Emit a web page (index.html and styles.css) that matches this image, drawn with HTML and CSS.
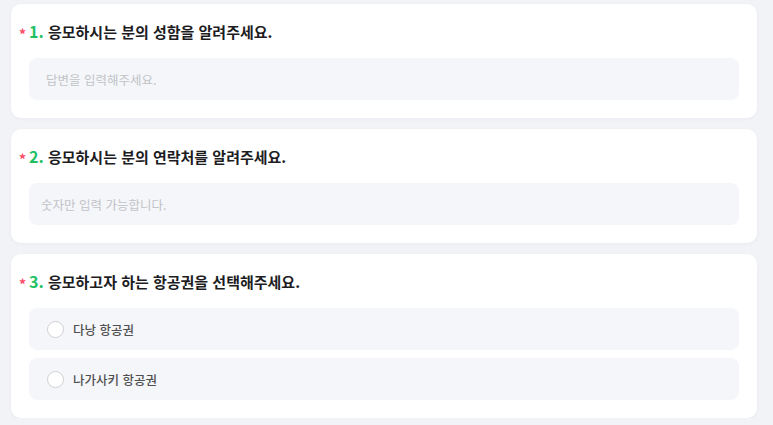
FILE: index.html
```html
<!DOCTYPE html>
<html lang="ko">
<head>
    <meta charset="UTF-8">
    <meta name="viewport" content="width=device-width, initial-scale=1.0">
    <title>항공권 응모</title>
    <link rel="stylesheet" href="styles.css">
</head>
<body>
    <div class="formWrap">
        <div class="qCard">
            <h3 class="qTitle"><span class="req">*</span><span class="num">1.</span> 응모하시는 분의 성함을 알려주세요.</h3>
            <input class="answer" type="text" placeholder="답변을 입력해주세요.">
        </div>

        <div class="qCard">
            <h3 class="qTitle"><span class="req">*</span><span class="num">2.</span> 응모하시는 분의 연락처를 알려주세요.</h3>
            <input class="answer answerTight" type="text" placeholder="숫자만 입력 가능합니다.">
        </div>

        <div class="qCard">
            <h3 class="qTitle"><span class="req">*</span><span class="num">3.</span> 응모하고자 하는 항공권을 선택해주세요.</h3>
            <label class="option">
                <input type="radio" name="ticket" value="danang">
                <span class="dot"></span>
                <span>다낭 항공권</span>
            </label>
            <label class="option">
                <input type="radio" name="ticket" value="nagasaki">
                <span class="dot"></span>
                <span>나가사키 항공권</span>
            </label>
        </div>
    </div>
</body>
</html>
```

FILE: styles.css
```css
html{
    height: 100%;
}
body{
    margin: 0;
    padding: 0;
    background: #f2f3f7;
    font-family: "Noto Sans CJK KR", "Noto Sans", sans-serif;
    color: #222;
}

.formWrap{
    width: 746px;
    padding: 4px 0 0 11px;
    display: flex;
    flex-direction: column;
    gap: 11px;
}

.qCard{
    background: #fff;
    border-radius: 10px;
    padding: 15px 18px 18px;
    display: flex;
    flex-direction: column;
    gap: 8px;
    box-shadow: 0 1px 4px rgba(30, 40, 80, 0.04);
}

.qTitle{
    height: 24px;
    margin: 0 0 7px -10px;
    display: flex;
    align-items: baseline;
    white-space: pre;
    font-size: 15px;
    line-height: 24px;
    font-weight: 700;
    color: #1d1d1f;
}
.req{
    align-self: center;
    padding-top: 5px;
    line-height: 14px;
    color: #ff4a66;
    font-size: 14px;
    margin-right: 3px;
}
.num{
    color: #21c063;
    font-size: 16px;
}

.answer{
    height: 42px;
    box-sizing: border-box;
    border: none;
    border-radius: 8px;
    background: #f5f6fa;
    padding: 0 17px;
    font-family: inherit;
    font-size: 12.5px;
    outline: none;
}
.answerTight{
    padding: 0 12px;
}
.answer::placeholder{
    color: #c2c3c7;
}

.option{
    height: 42px;
    display: flex;
    align-items: center;
    gap: 9px;
    padding: 0 18px;
    background: #f5f6fa;
    border-radius: 8px;
    font-size: 12.5px;
    font-weight: 500;
    color: #505052;
    cursor: pointer;
}
.option input{
    display: none;
}
.dot{
    width: 15px;
    height: 15px;
    border: 1.5px solid #cfd0d4;
    border-radius: 50%;
    background: #fff;
}
```
